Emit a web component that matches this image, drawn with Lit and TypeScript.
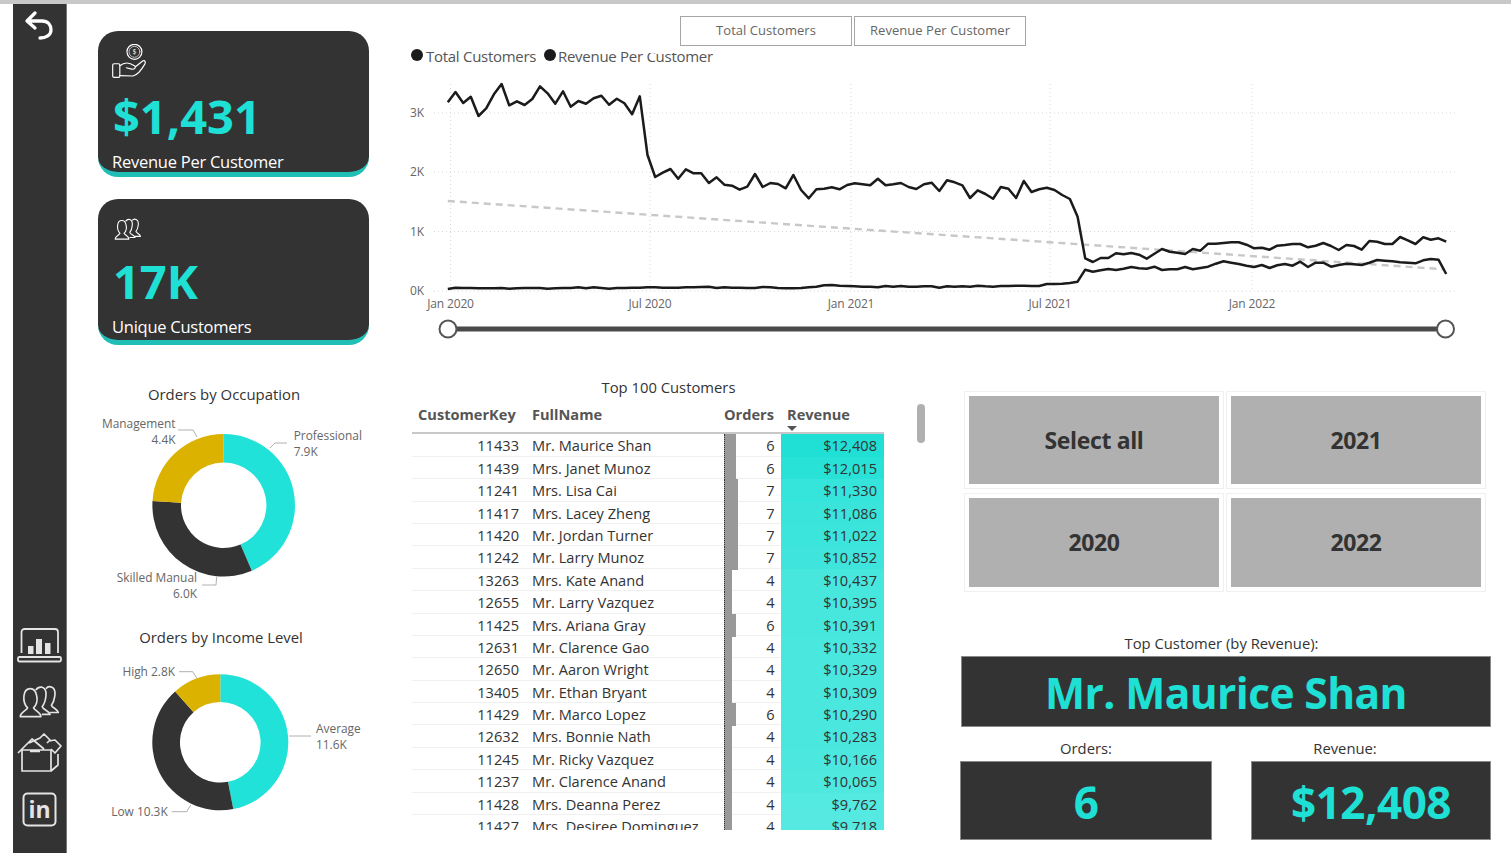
import { LitElement, html, css, svg } from "lit";
import { customElement } from "lit/decorators.js";

const customersTop = [307,276,309,290,348,325,283,252,316,304,315,297,259,280,311,274,320,303,311,295,287,314,296,310,343,289,465,531,518,507,536,508,520,520,549,532,554,557,569,560,522,561,549,552,565,525,570,595,568,566,562,568,555,550,553,556,536,556,553,549,561,567,553,548,573,541,547,556,594,571,582,596,561,566,594,543,576,568,563,570,585,597,650,775,786];
const customersEnd = [594,594,580,583,579,584,596,581,567,575,578,582,567,572,551,551,549,547,547,554,565,563,569,557,555,552,552,562,557,549,558,570,555,558,569,543,545,552,552,531,541,552,532,539,535,545];
const revenueTop = [867,863,864,864,865,865,865,864,866,865,864,864,864,866,865,864,864,862,865,862,864,866,864,864,863,863,862,862,863,863,863,862,862,861,860,864,862,863,863,864,864,861,862,864,865,865,864,862,860,856,855,857,858,859,860,860,862,858,860,858,860,860,859,859,863,859,860,859,860,857,859,860,858,858,857,857,858,858,852,852,851,849,845,809,815];
const revenueEnd = [631,627,630,626,621,625,626,620,630,628,628,621,628,624,620,611,604,608,612,617,621,615,624,616,612,617,605,621,608,608,620,615,611,613,615,608,600,602,604,607,608,610,601,597,599,642];

// y values were read off at 3x, the second run from a crop starting at y=60
const toPoints = (top: number[], end: number[]) =>
  [...top.map((y) => y / 3), ...end.map((y) => 60 + y / 3)]
    .map((y, i) => `${(447.8 + i * 7.68).toFixed(1)},${y.toFixed(1)}`)
    .join(" ");

const customers = [
  [11433, "Mr. Maurice Shan", 6, 12408],
  [11439, "Mrs. Janet Munoz", 6, 12015],
  [11241, "Mrs. Lisa Cai", 7, 11330],
  [11417, "Mrs. Lacey Zheng", 7, 11086],
  [11420, "Mr. Jordan Turner", 7, 11022],
  [11242, "Mr. Larry Munoz", 7, 10852],
  [13263, "Mrs. Kate Anand", 4, 10437],
  [12655, "Mr. Larry Vazquez", 4, 10395],
  [11425, "Mrs. Ariana Gray", 6, 10391],
  [12631, "Mr. Clarence Gao", 4, 10332],
  [12650, "Mr. Aaron Wright", 4, 10329],
  [13405, "Mr. Ethan Bryant", 4, 10309],
  [11429, "Mr. Marco Lopez", 6, 10290],
  [12632, "Mrs. Bonnie Nath", 4, 10283],
  [11245, "Mr. Ricky Vazquez", 4, 10166],
  [11237, "Mr. Clarence Anand", 4, 10065],
  [11428, "Mrs. Deanna Perez", 4, 9762],
  [11427, "Mrs. Desiree Dominguez", 4, 9718],
] as [number, string, number, number][];

const revenueColor = (v: number) => {
  const t = (12408 - v) / (12408 - 9718);
  return `rgb(${32 + 53 * t},${224 + 9 * t},${213 + 12 * t})`;
};

// donut slice between two angles, clockwise from the top
const slice = (cx: number, cy: number, r: number, ir: number, a: number, b: number) => {
  const p = (rad: number, deg: number) => {
    const t = (deg * Math.PI) / 180;
    return `${(cx + rad * Math.sin(t)).toFixed(2)} ${(cy - rad * Math.cos(t)).toFixed(2)}`;
  };
  const large = b - a > 180 ? 1 : 0;
  return `M${p(r, a)} A${r} ${r} 0 ${large} 1 ${p(r, b)} L${p(ir, b)} A${ir} ${ir} 0 ${large} 0 ${p(ir, a)} Z`;
};

const peopleIcon = (cls: string) => svg`
  <svg class=${cls} viewBox="0 0 90 72" fill="none" stroke="currentColor" stroke-width="3.6" stroke-linejoin="round">
    <path d="M3 69 H48 C48 60 35 56 32 50 C38 44 41 34 39 24 C37 12 31 8 25 8 C17 8 12 14 11 24 C10 34 13 44 19 50 C16 56 3 60 3 69Z" />
    <path d="M37 11 C41 5 47 4 51 5 C57 7 60 14 59 24 C58 34 55 42 51 47 C52 54 66 56 68 64 H50" />
    <path d="M59 8 C63 3 68 3 72 5 C78 8 80 16 78 26 C77 34 74 40 71 44 C73 50 84 52 86 60 H68" />
  </svg>`;

@customElement("app-root")
export class AppRoot extends LitElement {
  static styles = css`
    :host {
      display: block;
      width: 1511px;
      height: 853px;
      overflow: hidden;
      background: #fff;
      font-family: "Open Sans", "Noto Sans", sans-serif;
      color: #333;
    }

    .topbar {
      height: 4px;
      background: #c8c8c8;
    }

    .page {
      display: flex;
      height: 849px;
    }

    .nav {
      display: flex;
      flex-direction: column;
      align-items: center;
      flex: none;
      box-sizing: border-box;
      width: 54px;
      margin-left: 13px;
      padding: 6px 0 26px;
      background: #333;
      border-right: 1px solid #777;
      color: #e4e4e4;
    }

    .nav svg {
      display: block;
      flex: none;
    }

    .back {
      width: 30px;
      height: 30px;
      margin-left: -2px;
      color: #fff;
    }

    .laptop {
      width: 45px;
      height: 35px;
      margin-top: auto;
    }

    .nav-people {
      width: 43px;
      height: 33px;
      margin-top: 22px;
    }

    .box {
      width: 45px;
      height: 40px;
      margin-top: 15px;
    }

    .linkedin {
      width: 35px;
      height: 35px;
      margin-top: 19px;
    }

    .left {
      flex: none;
      width: 271px;
      margin-left: 31px;
      padding-top: 27px;
    }

    .card {
      box-sizing: border-box;
      height: 146px;
      margin-bottom: 22px;
      padding: 13px 14px 0;
      background: #333;
      border-bottom: 5px solid #20bfb6;
      border-radius: 20px;
      color: #fff;
      overflow: hidden;
    }

    .card-icon {
      display: flex;
      height: 34px;
    }

    .card-people {
      height: 31px;
    }

    .card-icon svg {
      display: block;
      height: 100%;
    }

    .card .people {
      width: 30px;
      height: 22px;
      margin: 6px 0 0 1px;
    }

    .card .value {
      margin-top: 7px;
      margin-left: 1px;
      font-size: 47px;
      line-height: 62px;
      font-weight: 700;
      color: #1fe0d5;
    }

    .card .label {
      margin-top: 5px;
      font-size: 16.5px;
      line-height: 20px;
      letter-spacing: -0.25px;
    }

    .donut {
      display: block;
      width: 271px;
    }

    .donut-a {
      height: 235px;
      margin-top: 30px;
    }

    .donut-b {
      height: 234px;
      margin-top: 5px;
    }

    .right {
      flex: 1;
      min-width: 0;
      margin-left: 36px;
    }

    .toggles {
      display: flex;
      gap: 2px;
      height: 30px;
      padding: 12px 0 0 275px;
    }

    .toggles div {
      box-sizing: border-box;
      width: 172px;
      border: 1.5px solid #a6a6a6;
      color: #666;
      font-size: 13px;
      line-height: 27px;
      text-align: center;
      letter-spacing: 0.05px;
    }

    .trend {
      display: block;
      width: 1060px;
      height: 299px;
    }

    .trend text,
    .donut text {
      dominant-baseline: central;
    }

    .axis {
      font-size: 12px;
      fill: #666;
      letter-spacing: -0.15px;
    }

    .legend {
      font-size: 15px;
      fill: #555;
      letter-spacing: -0.28px;
    }

    .grid {
      stroke: #d8d8d8;
      stroke-width: 1;
      stroke-dasharray: 1 3;
    }

    .line {
      fill: none;
      stroke: #1b1b1b;
      stroke-width: 2.5;
      stroke-linejoin: round;
    }

    .dashed {
      stroke: #c8c8c8;
      stroke-width: 2.4;
      stroke-dasharray: 7 5;
    }

    .track {
      stroke: #4a4a4a;
      stroke-width: 5;
    }

    .handle {
      fill: #fff;
      stroke: #555;
      stroke-width: 2;
    }

    .title {
      font-size: 14.9px;
      fill: #333;
      text-anchor: middle;
    }

    .slice-label {
      font-size: 11.9px;
      fill: #666;
    }

    .end {
      text-anchor: end;
    }

    .leader {
      fill: none;
      stroke: #b0b0b0;
      stroke-width: 1;
    }

    .bottom {
      display: flex;
      margin-top: 30px;
    }

    .table-wrap {
      flex: none;
      width: 472px;
      margin-left: 7px;
    }

    .table-title {
      height: 25px;
      padding-left: 41px;
      font-size: 14.8px;
      line-height: 25px;
      text-align: center;
    }

    .row {
      display: grid;
      grid-template-columns: 107px 205px 56.5px 103.5px;
      box-sizing: border-box;
      height: 22.4px;
      font-size: 14.6px;
      line-height: 22.4px;
    }

    .head {
      height: 34.4px;
      border-bottom: 2px solid #c8c8c8;
      color: #555;
      font-weight: 700;
      font-size: 14.6px;
      line-height: 28px;
    }

    .head .key {
      padding-left: 6px;
      text-align: left;
    }

    .head .sort {
      position: relative;
      padding-left: 6.5px;
    }

    .head .sort::after {
      content: "";
      position: absolute;
      left: 6px;
      top: 26px;
      border: 5px solid transparent;
      border-top: 5px solid #555;
      border-bottom: 0;
    }

    .body {
      height: 396px;
      overflow: hidden;
    }

    .body .row {
      border-bottom: 1px solid #f0f0f0;
    }

    .key {
      text-align: right;
    }

    .name {
      padding-left: 13px;
      white-space: nowrap;
    }

    .orders {
      display: flex;
      justify-content: space-between;
      padding-right: 6px;
      margin-bottom: -1px;
      text-align: right;
    }

    .orders i {
      display: block;
      background: #999;
      border-left: 1px dotted #333;
    }

    .revenue {
      padding-right: 7px;
      text-align: right;
      border-bottom: 1px solid #d5f7f5;
      margin-bottom: -1px;
    }

    .scroll {
      flex: none;
      width: 8px;
      height: 39px;
      margin: 29px 0 0 33px;
      border-radius: 4px;
      background: #b0b0b0;
    }

    .panel {
      flex: none;
      width: 531px;
      margin-left: 35px;
      padding-top: 16px;
    }

    .slicers {
      display: grid;
      grid-template-columns: 260px 260px;
      grid-template-rows: 97.5px 98.5px;
      gap: 4.5px 2px;
      margin-left: 4px;
    }

    .slicer {
      box-sizing: border-box;
      padding: 4px;
      border: 1px solid #f0f0f0;
    }

    .slicer div {
      display: flex;
      align-items: center;
      justify-content: center;
      height: 100%;
      background: #b0b0b0;
      font-size: 23px;
      font-weight: 700;
      letter-spacing: -0.35px;
    }

    .caption {
      font-size: 14.8px;
      line-height: 20px;
      text-align: center;
    }

    .top-caption {
      margin-top: 41.5px;
      padding-right: 8px;
    }

    .revenue-caption {
      padding-right: 52px;
    }

    .kpi {
      display: flex;
      align-items: center;
      justify-content: center;
      box-sizing: border-box;
      padding-top: 2px;
      background: #333;
      border: 1px solid #8a8a8a;
      color: #1fe0d5;
      font-weight: 700;
    }

    .kpi-name {
      width: 530px;
      height: 71px;
      margin: 3px 0 0 1px;
      font-size: 42.5px;
      letter-spacing: -0.6px;
    }

    .pair {
      display: flex;
      justify-content: space-between;
      margin-top: 11px;
    }

    .pair .kpi {
      height: 79px;
      margin-top: 3px;
      font-size: 44px;
      letter-spacing: -0.5px;
    }

    .orders-box {
      width: 252px;
    }

    .revenue-box {
      width: 240px;
    }
  `;

  renderDonut(cls: string, box: string, title: string, tx: number, ty: number, c: number[], arcs: number[], labels: any) {
    const colors = ["#20e2d8", "#333333", "#dbb200"];
    return svg`
      <svg class="donut ${cls}" viewBox=${box}>
        <text class="title" x=${tx} y=${ty}>${title}</text>
        ${colors.map((color, i) =>
          svg`<path d=${slice(c[0], c[1], c[2], c[3], arcs[i], arcs[i + 1])} fill=${color} />`
        )}
        ${labels}
      </svg>`;
  }

  render() {
    return html`
      <div class="topbar"></div>
      <div class="page">
        <nav class="nav">
          <svg class="back" viewBox="0 0 30 30" fill="none" stroke="currentColor" stroke-width="3.300" stroke-linecap="round" stroke-linejoin="round">
            <path d="M11 3 L3 11 L11 18 M4 11 H18 C24 11 27 15 27 20 C27 25 22 28 16 28" />
          </svg>
          <svg class="laptop" viewBox="0 0 45 35" fill="none" stroke="currentColor" stroke-width="1.8">
            <path d="M4.500 25 V4 a3 3 0 0 1 3 -3 H38 a3 3 0 0 1 3 3 V25" />
            <rect x="1" y="29" width="43" height="4.500" rx="1.500" />
            <g fill="currentColor" stroke="none">
              <rect x="11" y="18" width="5.500" height="8" />
              <rect x="19" y="11" width="6" height="15" />
              <rect x="28" y="15" width="5.500" height="11" />
            </g>
          </svg>
          ${peopleIcon("nav-people")}
          <svg class="box" viewBox="0 0 45 40" fill="none" stroke="currentColor" stroke-width="1.700" stroke-linejoin="round">
            <path d="M5 17 H34 V38 H5 Z M1 20 L15 6 L27 16 M34 38 L41 32 V21 M13 18.500 H23 M12 10 L23 5 L27 1 L33 7 L30 10 M32 8 L38 7 L44 13 L38 20 L34 16" />
          </svg>
          <svg class="linkedin" viewBox="0 0 35 35">
            <rect x="1.500" y="1.500" width="32" height="32" rx="4" fill="none" stroke="currentColor" stroke-width="2" />
            <text x="17.500" y="26" text-anchor="middle" fill="currentColor" font-size="23" font-weight="700">in</text>
          </svg>
        </nav>

        <div class="left">
          <div class="card">
            <div class="card-icon">
              <svg viewBox="0 0 100 100" fill="none" stroke="#fff" stroke-width="3.400" stroke-linejoin="round" stroke-linecap="round">
                <circle cx="66" cy="23" r="22" />
                <circle cx="66" cy="23" r="16" stroke-width="2" />
                <text x="66" y="30" text-anchor="middle" font-size="20" fill="#fff" stroke="none">$</text>
                <rect x="2" y="58" width="21" height="40" rx="4" />
                <path d="M23 64 C38 52 50 54 66 64 C72 68 66 76 58 74 L42 70 M70 66 L90 50 C97 46 100 54 96 60 C88 74 78 90 62 94 L23 93" />
              </svg>
            </div>
            <div class="value">$1,431</div>
            <div class="label">Revenue Per Customer</div>
          </div>
          <div class="card">
            <div class="card-icon card-people">${peopleIcon("people")}</div>
            <div class="value">17K</div>
            <div class="label">Unique Customers</div>
          </div>
          ${this.renderDonut("donut-a", "98 375 271 235", "Orders by Occupation", 224, 394, [223.7, 505.3, 71.3, 42.7], [0, 156.8, 273.5, 360], svg`
            <text class="slice-label end" x="175.500" y="422.500">Management</text>
            <text class="slice-label end" x="175.500" y="438.500">4.4K</text>
            <path class="leader" d="M178 430 H193 L197 437" />
            <text class="slice-label" x="293.700" y="435">Professional</text>
            <text class="slice-label" x="293.700" y="451">7.9K</text>
            <path class="leader" d="M287 443 H275 L270 448" />
            <text class="slice-label end" x="197" y="576.500">Skilled Manual</text>
            <text class="slice-label end" x="197" y="592.500">6.0K</text>
            <path class="leader" d="M202 585 H216 L216.700 577" />
          `)}
          ${this.renderDonut("donut-b", "98 615 271 234", "Orders by Income Level", 221, 637, [220.3, 742.3, 68, 40.3], [0, 169, 318.4, 360], svg`
            <text class="slice-label end" x="175" y="671">High 2.8K</text>
            <path class="leader" d="M179 671.700 H192.700 L196.700 678" />
            <text class="slice-label" x="316" y="728">Average</text>
            <text class="slice-label" x="316" y="744">11.6K</text>
            <path class="leader" d="M289 736 H311" />
            <text class="slice-label end" x="167.700" y="811">Low 10.3K</text>
            <path class="leader" d="M171.700 811.700 H186.700 L190.700 805" />
          `)}
        </div>

        <div class="right">
          <div class="toggles">
            <div>Total Customers</div>
            <div>Revenue Per Customer</div>
          </div>
          <svg class="trend" viewBox="405 46 1060 299">
            <circle cx="417" cy="55" r="6" fill="#1b1b1b" />
            <text class="legend" x="426" y="55.500">Total Customers</text>
            <circle cx="550" cy="55" r="6" fill="#1b1b1b" />
            <text class="legend" x="558" y="55.500">Revenue Per Customer</text>
            <rect x="647" y="46" width="75" height="7" fill="#fff" />
            ${[113, 172, 231.5, 291].map((y) => svg`<line class="grid" x1="434" x2="1457" y1=${y} y2=${y} />`)}
            ${[450.5, 650, 851, 1050, 1252].map((x) => svg`<line class="grid" x1=${x} x2=${x} y1="84" y2="291" />`)}
            ${[["3K", 112.5], ["2K", 171.5], ["1K", 231], ["0K", 290.5]].map(
              ([t, y]) => svg`<text class="axis" x="410" y=${y}>${t}</text>`
            )}
            ${[["Jan 2020", 450.5], ["Jul 2020", 650], ["Jan 2021", 851], ["Jul 2021", 1050], ["Jan 2022", 1252]].map(
              ([t, x]) => svg`<text class="axis" text-anchor="middle" x=${x} y="303.500">${t}</text>`
            )}
            <line class="dashed" x1="447.800" y1="201" x2="1444.600" y2="269.300" />
            <polyline class="line" points=${toPoints(customersTop, customersEnd)} />
            <polyline class="line" points=${toPoints(revenueTop, revenueEnd)} />
            <line class="track" x1="448" x2="1445" y1="329" y2="329" />
            <circle class="handle" cx="448" cy="329" r="8.500" />
            <circle class="handle" cx="1445.500" cy="329" r="8.500" />
          </svg>

          <div class="bottom">
            <div class="table-wrap">
              <div class="table-title">Top 100 Customers</div>
              <div class="row head">
                <div class="key">CustomerKey</div>
                <div class="name">FullName</div>
                <div>Orders</div>
                <div class="sort">Revenue</div>
              </div>
              <div class="body">
                ${customers.map(
                  ([key, name, orders, revenue]) => html`
                    <div class="row">
                      <div class="key">${key}</div>
                      <div class="name">${name}</div>
                      <div class="orders">
                        <i style="width:${orders * 1.8}px"></i>
                        <span>${orders}</span>
                      </div>
                      <div class="revenue" style="background:${revenueColor(revenue)}">
                        $${revenue.toLocaleString("en-US")}
                      </div>
                    </div>
                  `
                )}
              </div>
            </div>
            <div class="scroll"></div>
            <div class="panel">
              <div class="slicers">
                <div class="slicer"><div>Select all</div></div>
                <div class="slicer"><div>2021</div></div>
                <div class="slicer"><div>2020</div></div>
                <div class="slicer"><div>2022</div></div>
              </div>
              <div class="caption top-caption">Top Customer (by Revenue):</div>
              <div class="kpi kpi-name">Mr. Maurice Shan</div>
              <div class="pair">
                <div>
                  <div class="caption">Orders:</div>
                  <div class="kpi orders-box">6</div>
                </div>
                <div>
                  <div class="caption revenue-caption">Revenue:</div>
                  <div class="kpi revenue-box">$12,408</div>
                </div>
              </div>
            </div>
          </div>
        </div>
      </div>
    `;
  }
}
